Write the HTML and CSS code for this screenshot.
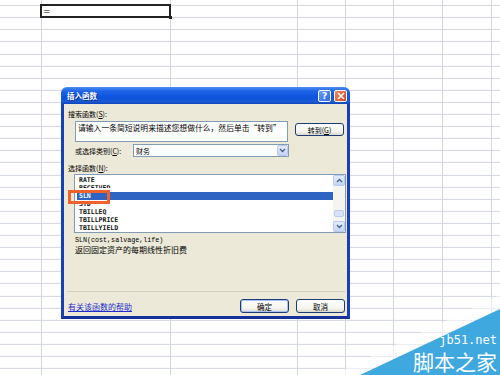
FILE: index.html
```html
<!DOCTYPE html>
<html lang="zh-CN">
<head>
  <meta charset="UTF-8">
  <title>插入函数</title>
  <link rel="stylesheet" href="styles.css">
</head>
<body>

  <div class="sheet">
    <div class="col col-a"></div>
    <div class="col col-b">
      <div class="active-cell">=</div>
    </div>
    <div class="col col-c"></div>
    <div class="col col-d"></div>
    <div class="col col-e"></div>
    <div class="col col-f"></div>
    <div class="col col-g"></div>
    <div class="col col-h"></div>
  </div>

  <div class="dialog">
    <div class="titlebar">
      <span class="title">插入函数</span>
      <span class="tb-btn tb-help">?</span>
      <span class="tb-btn tb-close">
        <svg width="8" height="8" viewBox="0 0 8 8"><path d="M1 1 L7 7 M7 1 L1 7" stroke="#fff" stroke-width="1.6"/></svg>
      </span>
    </div>

    <div class="dlg-body">
      <div class="label">搜索函数(<u>S</u>):</div>
      <div class="search-row">
        <div class="textbox">请输入一条简短说明来描述您想做什么，然后单击“转到”</div>
        <div class="btn btn-go">转到(<u>G</u>)</div>
      </div>

      <div class="cat-row">
        <span class="label">或选择类别(<u>C</u>):</span>
        <div class="combo">
          <span class="combo-text">财务</span>
          <span class="combo-drop">
            <svg width="7" height="5" viewBox="0 0 7 5"><path d="M1 1 L3.5 3.5 L6 1" fill="none" stroke="#4d6185" stroke-width="1.4"/></svg>
          </span>
        </div>
      </div>

      <div class="label label-list">选择函数(<u>N</u>):</div>
      <div class="listbox">
        <div class="items">
          <div class="item">RATE</div>
          <div class="item item-cut">RECEIVED</div>
          <div class="item item-sel">SLN</div>
          <div class="item">SYD</div>
          <div class="item">TBILLEQ</div>
          <div class="item">TBILLPRICE</div>
          <div class="item">TBILLYIELD</div>
        </div>
        <div class="scrollbar">
          <span class="sb-btn">
            <svg width="7" height="5" viewBox="0 0 7 5"><path d="M1 4 L3.5 1.5 L6 4" fill="none" stroke="#4d6185" stroke-width="1.4"/></svg>
          </span>
          <span class="sb-track"><span class="sb-thumb"></span></span>
          <span class="sb-btn">
            <svg width="7" height="5" viewBox="0 0 7 5"><path d="M1 1 L3.5 3.5 L6 1" fill="none" stroke="#4d6185" stroke-width="1.4"/></svg>
          </span>
        </div>
        <div class="mark"></div>
      </div>

      <div class="sig">SLN(cost,salvage,life)</div>
      <div class="desc">返回固定资产的每期线性折旧费</div>

      <div class="footer">
        <a class="help-link" href="#">有关该函数的帮助</a>
        <div class="btn btn-ok">确定</div>
        <div class="btn">取消</div>
      </div>
    </div>
  </div>

  <div class="watermark">
    <svg class="wm-bg" width="140" height="66" viewBox="0 0 140 66">
      <polygon points="-28,66 140,-14 140,0 0,66" fill="#ffffff" fill-opacity="0.55"/>
      <polygon points="0,66 140,0 140,66" fill="#3fa8df"/>
    </svg>
    <div class="wm-url">jb51.net</div>
    <div class="wm-name">脚本之家</div>
  </div>

</body>
</html>
```

FILE: styles.css
```css
body {
  margin: 0;
  font-family: "Noto Sans CJK SC", "DejaVu Sans", sans-serif;
  overflow: hidden;
}
.sheet {
  display: flex;
  height: 375px;
  background: repeating-linear-gradient(to bottom, transparent 0, transparent 11.1px, #d2d6e1 11.1px, #d2d6e1 12.1px);
  background-position: 0 -6.1px;
}
.col {
  flex: none;
  box-sizing: border-box;
  border-right: 1px solid #d2d6e1;
}
.col-a { width: 42px; }
.col-b { width: 129px; }
.col-c { width: 127px; }
.col-d { width: 48px; }
.col-e { width: 48px; }
.col-f { width: 49px; }
.col-g { width: 49px; }
.col-h { flex: 1; border-right: none; }

.active-cell {
  position: relative;
  box-sizing: border-box;
  margin: 4px 0 0 -2px;
  width: 131px;
  height: 14px;
  border: 2px solid #222;
  background: #fff;
  font-family: "DejaVu Sans", sans-serif;
  font-size: 9px;
  line-height: 10px;
  padding-left: 1px;
}
.active-cell::after {
  content: "";
  position: absolute;
  right: -3px;
  bottom: -3px;
  width: 3px;
  height: 3px;
  background: #222;
}

/* dialog window */
.dialog {
  position: absolute;
  left: 61px;
  top: 87px;
  width: 289px;
  height: 232px;
  display: flex;
  flex-direction: column;
}
.titlebar {
  height: 17px;
  display: flex;
  align-items: center;
  padding: 0 3px 0 6px;
  border-radius: 6px 6px 0 0;
  background: linear-gradient(#4a8cf5, #1e63e6 25%, #0b53dd 60%, #1a5bd6 85%, #1044b8);
}
.title {
  flex: 1;
  color: #fff;
  font-size: 7.5px;
  font-weight: bold;
  text-shadow: 1px 1px 0 #0a2a8a;
}
.tb-btn {
  width: 13px;
  height: 12px;
  box-sizing: border-box;
  border: 1px solid #fff;
  border-radius: 2px;
  margin-left: 3px;
  display: flex;
  align-items: center;
  justify-content: center;
  color: #fff;
  font-family: "DejaVu Sans", sans-serif;
  font-weight: bold;
  font-size: 9px;
}
.tb-help {
  background: linear-gradient(135deg, #6d9ff7, #2d67e0);
}
.tb-close {
  background: linear-gradient(135deg, #f08a66, #d8421c);
}

.dlg-body {
  flex: 1;
  display: flex;
  flex-direction: column;
  background: #ece9d8;
  border: 3px solid #1b3fb4;
  border-top: none;
  border-bottom-color: #16309a;
  padding-left: 4px;
  font-size: 7px;
  color: #000;
}
.label {
  font-size: 7px;
  line-height: 10px;
}
.dlg-body > .label:first-child {
  margin-top: 5px;
}
u {
  text-decoration: underline;
}

.search-row {
  display: flex;
  align-items: flex-start;
  margin: 2px 0 0 7px;
}
.textbox {
  width: 213px;
  height: 21px;
  box-sizing: border-box;
  border: 1px solid #7f9db9;
  background: #fff;
  font-size: 7.8px;
  line-height: 10px;
  padding: 1px 0 0 2px;
  white-space: nowrap;
  overflow: hidden;
}
.btn {
  width: 49px;
  height: 13px;
  box-sizing: border-box;
  border: 1px solid #1c3d74;
  border-radius: 3px;
  background: linear-gradient(#ffffff, #f4f3ee 70%, #dcd9cc);
  font-size: 7px;
  display: flex;
  align-items: center;
  justify-content: center;
}
.btn-go {
  margin: 2px 0 0 7px;
}

.cat-row {
  display: flex;
  align-items: center;
  margin: 2px 0 0 7px;
}
.cat-row .label {
  width: 58px;
}
.combo {
  width: 156px;
  height: 13px;
  box-sizing: border-box;
  border: 1px solid #7f9db9;
  background: #fff;
  display: flex;
  align-items: center;
}
.combo-text {
  flex: 1;
  padding-left: 2px;
  font-size: 7px;
}
.combo-drop, .sb-btn {
  width: 11px;
  height: 11px;
  box-sizing: border-box;
  border: 1px solid #b9c9ef;
  border-radius: 2px;
  background: linear-gradient(#e3ebfd, #c4d4f8);
  display: flex;
  align-items: center;
  justify-content: center;
}

.label-list {
  margin-top: 6px;
}
.listbox {
  position: relative;
  display: flex;
  width: 272px;
  height: 59px;
  box-sizing: border-box;
  margin: 1px 0 0 6px;
  border: 1px solid #7f9db9;
  background: #fff;
}
.items {
  flex: 1;
  padding: 1px 0 0 2px;
  overflow: hidden;
}
.item {
  height: 8px;
  line-height: 8px;
  padding-left: 2px;
  font-family: "DejaVu Sans Mono", monospace;
  font-weight: bold;
  font-size: 6.5px;
  color: #111;
}
.item-cut {
  height: 4px;
  overflow: hidden;
  margin-bottom: 4px;
}
.item-sel {
  background: #2f64c2;
  color: #fff;
}
.scrollbar {
  width: 12px;
  display: flex;
  flex-direction: column;
  background: #f5f4ef;
}
.sb-btn {
  width: 12px;
}
.sb-track {
  flex: 1;
  display: flex;
  flex-direction: column;
  justify-content: flex-end;
  padding-bottom: 4px;
}
.sb-thumb {
  height: 5px;
  margin: 0 1px;
  border: 1px solid #bccbe9;
  border-radius: 2px;
  background: #d9e3f8;
}
.mark {
  position: absolute;
  left: -7px;
  top: 15px;
  width: 42px;
  height: 14px;
  box-sizing: border-box;
  border: 3px solid #f0622b;
}

.sig {
  margin: 3px 0 0 7px;
  font-family: "Liberation Mono", monospace;
  font-size: 6.7px;
  line-height: 8px;
}
.desc {
  margin: 1px 0 0 7px;
  font-size: 8px;
  line-height: 10px;
}

.footer {
  margin: auto 2px 0 -1px;
  border-top: 1px solid #d0cdbd;
  padding: 7px 0 3px 1px;
  display: flex;
  align-items: center;
}
.help-link {
  flex: 1;
  color: #1d2ccf;
  font-size: 8px;
  text-decoration: underline;
}
.footer .btn {
  height: 14px;
  margin-left: 7px;
  font-size: 7.5px;
}
.btn-ok {
  box-shadow: inset 0 0 0 1px #a9c4f4;
}

/* watermark */
.watermark {
  position: absolute;
  right: 0;
  bottom: 0;
  width: 140px;
  height: 66px;
}
.wm-bg {
  position: absolute;
  left: 0;
  top: 0;
  overflow: visible;
}
.wm-url {
  position: absolute;
  right: 3px;
  top: 25px;
  color: #fff;
  font-family: "DejaVu Sans Mono", monospace;
  font-size: 12px;
  line-height: 12px;
}
.wm-name {
  position: absolute;
  right: 3px;
  top: 42px;
  color: #fff;
  font-size: 21px;
  line-height: 20px;
}
```
